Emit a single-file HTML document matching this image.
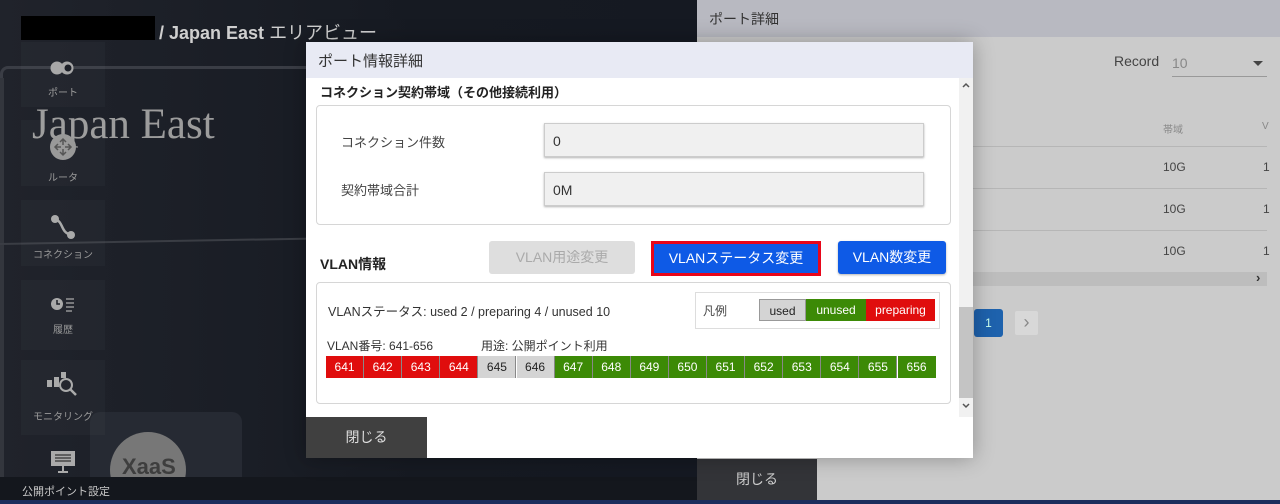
<!DOCTYPE html>
<html><head><meta charset="utf-8"><style>
*{margin:0;padding:0;box-sizing:border-box}
body{width:1280px;height:504px;overflow:hidden;position:relative;background:#1b1e26;font-family:"Liberation Sans","Noto Sans CJK JP",sans-serif;color:#222}
.a{position:absolute}
.side{color:#9a9a9a;font-size:10px;text-align:center;width:84px;left:21px}
.tile{position:absolute;left:21px;width:84px;background:rgba(255,255,255,0.025)}
.cell{position:absolute;top:356px;height:22px;width:38.1px;color:#fff;font-size:12px;text-align:center;line-height:22px;border-right:1px solid #888}
.r{background:#e00d0d}.g{background:#3c8a06}.u{background:#d4d4d4;color:#222}
</style></head><body>
<div class="a" style="left:0;top:0;width:697px;height:500px;background:linear-gradient(90deg,#20232b,#161a22 60%,#151922)"></div>
<div class="a" style="left:0;top:66px;width:697px;height:12px;border-top:3px solid #3a3d45;border-left:3px solid #3a3d45;border-radius:8px 0 0 0"></div>
<div class="a" style="left:0;top:78px;width:4px;height:420px;background:#33363d"></div>
<div class="a" style="left:0;top:243px;width:697px;height:2px;background:#3a3d44;transform:rotate(-1deg);transform-origin:left"></div>
<div class="a" style="left:90px;top:412px;width:152px;height:88px;background:#262a33;border-radius:10px;overflow:hidden"><div class="a" style="left:20px;top:20px;width:76px;height:76px;border-radius:50%;background:#777"></div><div class="a" style="left:32px;top:42px;font-size:22px;font-weight:bold;color:#3e3e3e">XaaS</div></div>
<div class="a" style="left:32px;top:100px;font-family:'Liberation Serif',serif;font-size:43px;color:#9c9c9c">Japan East</div>
<div class="a" style="left:21px;top:16px;width:134px;height:24px;background:#000"></div>
<div class="a" style="left:159px;top:19px;font-size:18px;color:#cfcfcf;font-weight:bold">/ Japan East <span style="font-weight:normal">エリアビュー</span></div>
<div class="tile" style="top:42px;height:65px"></div>
<div class="tile" style="top:120px;height:66px"></div>
<div class="tile" style="top:200px;height:66px"></div>
<div class="tile" style="top:280px;height:70px"></div>
<div class="tile" style="top:360px;height:75px"></div>
<svg class="a" style="left:50px;top:60px" width="26" height="16"><circle cx="7" cy="8" r="6.5" fill="#a8a8a8"/><circle cx="17" cy="8" r="6.5" fill="#a8a8a8"/><circle cx="18" cy="8" r="3.5" fill="#1c1f27"/></svg>
<div class="a side" style="top:84px">ポート</div>
<svg class="a" style="left:50px;top:134px" width="26" height="26"><circle cx="13" cy="13" r="13" fill="#999"/><path d="M13 5v6M10 8l3-3 3 3M13 21v-6M10 18l3 3 3-3M5 13h6M8 10l-3 3 3 3M21 13h-6M18 10l3 3-3 3" stroke="#555" stroke-width="1.5" fill="none"/></svg>
<div class="a side" style="top:169px">ルータ</div>
<svg class="a" style="left:50px;top:214px" width="26" height="26"><circle cx="5" cy="5" r="4" fill="#aaa"/><circle cx="21" cy="21" r="4" fill="#aaa"/><path d="M5 5C14 8 10 18 21 21" stroke="#aaa" stroke-width="2.5" fill="none"/></svg>
<div class="a side" style="top:246px">コネクション</div>
<svg class="a" style="left:50px;top:296px" width="26" height="18"><circle cx="7" cy="8" r="6" fill="#aaa"/><path d="M7 4v4h3" stroke="#1c1f27" stroke-width="1.5" fill="none"/><path d="M16 3h8M16 7h8M16 11h8M16 15h6" stroke="#aaa" stroke-width="1.3"/></svg>
<div class="a side" style="top:321px">履歴</div>
<svg class="a" style="left:46px;top:370px" width="34" height="26"><rect x="1" y="10" width="5" height="7" fill="#aaa"/><rect x="8" y="7" width="5" height="10" fill="#aaa"/><rect x="15" y="2" width="5" height="6" fill="#aaa"/><circle cx="20" cy="15" r="6" stroke="#aaa" stroke-width="2" fill="none"/><path d="M24 19l6 6" stroke="#aaa" stroke-width="2.5"/></svg>
<div class="a side" style="top:408px">モニタリング</div>
<svg class="a" style="left:51px;top:451px" width="24" height="22"><rect x="0" y="0" width="24" height="15" fill="#aaa"/><path d="M4 4h16M4 7h16M4 10h16" stroke="#333" stroke-width="1.2"/><path d="M12 15v5M7 21h10" stroke="#aaa" stroke-width="2"/></svg>
<div class="a" style="left:0;top:477px;width:697px;height:23px;background:#14171d"></div>
<div class="a" style="left:22px;top:483px;font-size:11px;color:#c8c8c8">公開ポイント設定</div>
<div class="a" style="left:697px;top:0;width:583px;height:500px;background:#cbcbcb"></div>
<div class="a" style="left:697px;top:0;width:583px;height:37px;background:#b8b9c1"></div>
<div class="a" style="left:709px;top:9px;font-size:14px;color:#333">ポート詳細</div>
<div class="a" style="left:1114px;top:53px;font-size:14px;color:#444">Record</div>
<div class="a" style="left:1172px;top:55px;font-size:14px;color:#888">10</div>
<div class="a" style="left:1172px;top:76px;width:95px;height:1px;background:#999"></div>
<div class="a" style="left:1253px;top:61px;border-left:5px solid transparent;border-right:5px solid transparent;border-top:5px solid #444"></div>
<div class="a" style="left:1163px;top:121px;font-size:10px;color:#888">帯域</div>
<div class="a" style="left:1262px;top:121px;font-size:10px;color:#888">V</div>
<div class="a" style="left:973px;top:146px;width:294px;height:1px;background:#b6b6b6"></div>
<div class="a" style="left:973px;top:188px;width:294px;height:1px;background:#b6b6b6"></div>
<div class="a" style="left:973px;top:230px;width:294px;height:1px;background:#b6b6b6"></div>
<div class="a" style="left:1163px;top:160px;font-size:12px;color:#444">10G</div>
<div class="a" style="left:1163px;top:202px;font-size:12px;color:#444">10G</div>
<div class="a" style="left:1163px;top:244px;font-size:12px;color:#444">10G</div>
<div class="a" style="left:1263px;top:160px;font-size:12px;color:#444">1</div>
<div class="a" style="left:1263px;top:202px;font-size:12px;color:#444">1</div>
<div class="a" style="left:1263px;top:244px;font-size:12px;color:#444">1</div>
<div class="a" style="left:973px;top:272px;width:294px;height:14px;background:#bdbdbd"></div>
<div class="a" style="left:1256px;top:270px;font-size:13px;color:#333;font-weight:bold">›</div>
<div class="a" style="left:974px;top:309px;width:29px;height:28px;background:#1e62ad;border-radius:3px;color:#cfe;font-size:12px;text-align:center;line-height:28px">1</div>
<div class="a" style="left:1015px;top:311px;width:23px;height:24px;background:#d8d8d8;border-radius:2px;color:#888;font-size:18px;text-align:center;line-height:22px">›</div>
<div class="a" style="left:697px;top:459px;width:120px;height:41px;background:#333438;color:#ccc;font-size:14px;text-align:center;line-height:41px">閉じる</div>
<div class="a" style="left:0;top:500px;width:1280px;height:4px;background:#1c2d5c"></div>
<div class="a" style="left:306px;top:42px;width:667px;height:416px;background:#fff;box-shadow:0 0 20px rgba(0,0,0,.3)"></div>
<div class="a" style="left:306px;top:42px;width:667px;height:36px;background:#e8eaf4"></div>
<div class="a" style="left:318px;top:50px;font-size:15px;color:#333">ポート情報詳細</div>
<div class="a" style="left:959px;top:78px;width:14px;height:339px;background:#f1f1f1"></div>
<div class="a" style="left:959px;top:307px;width:14px;height:91px;background:#c4c4c4"></div>
<svg class="a" style="left:961px;top:81px" width="10" height="8"><path d="M2 6l3-3 3 3" stroke="#555" stroke-width="1.5" fill="none"/></svg>
<svg class="a" style="left:961px;top:402px" width="10" height="8"><path d="M2 2l3 3 3-3" stroke="#555" stroke-width="1.5" fill="none"/></svg>
<div class="a" style="left:320px;top:82px;font-size:13px;font-weight:bold;color:#222">コネクション契約帯域（その他接続利用）</div>
<div class="a" style="left:316px;top:105px;width:635px;height:120px;border:1px solid #d6d6d6;border-radius:4px"></div>
<div class="a" style="left:341px;top:132px;font-size:13px;color:#444">コネクション件数</div>
<div class="a" style="left:544px;top:123px;width:380px;height:34px;background:#f0f0f0;border:1px solid #ccc;box-shadow:0 1px 2px rgba(0,0,0,.3);font-size:14px;line-height:34px;padding-left:8px;color:#333">0</div>
<div class="a" style="left:341px;top:180px;font-size:13px;color:#444">契約帯域合計</div>
<div class="a" style="left:544px;top:172px;width:380px;height:34px;background:#f0f0f0;border:1px solid #ccc;box-shadow:0 1px 2px rgba(0,0,0,.3);font-size:14px;line-height:34px;padding-left:8px;color:#333">0M</div>
<div class="a" style="left:320px;top:254px;font-size:14px;font-weight:bold;color:#222">VLAN情報</div>
<div class="a" style="left:489px;top:241px;width:146px;height:33px;background:#dedede;border-radius:3px;color:#aaa;font-size:14px;text-align:center;line-height:33px">VLAN用途変更</div>
<div class="a" style="left:651px;top:241px;width:170px;height:35px;background:#0e5ae6;border:3px solid #e8061a;color:#fff;font-size:14px;text-align:center;line-height:29px">VLANステータス変更</div>
<div class="a" style="left:838px;top:241px;width:108px;height:33px;background:#0e5ae6;border-radius:3px;color:#fff;font-size:14px;text-align:center;line-height:33px;box-shadow:0 1px 2px rgba(0,0,0,.3)">VLAN数変更</div>
<div class="a" style="left:316px;top:282px;width:635px;height:122px;border:1px solid #d6d6d6;border-radius:4px"></div>
<div class="a" style="left:328px;top:301px;font-size:12.5px;color:#333">VLANステータス: used 2 / preparing 4 / unused 10</div>
<div class="a" style="left:695px;top:292px;width:245px;height:37px;border:1px solid #ddd"></div>
<div class="a" style="left:703px;top:302px;font-size:12px;color:#444">凡例</div>
<div class="a u" style="left:759px;top:299px;width:47px;height:22px;font-size:12px;text-align:center;line-height:22px;border:1px solid #999">used</div>
<div class="a g" style="left:806px;top:299px;width:60px;height:22px;font-size:12px;text-align:center;line-height:22px;color:#fff">unused</div>
<div class="a r" style="left:866px;top:299px;width:69px;height:22px;font-size:12px;text-align:center;line-height:22px;color:#fff">preparing</div>
<div class="a" style="left:327px;top:337px;font-size:12px;color:#333">VLAN番号: 641-656</div>
<div class="a" style="left:481px;top:337px;font-size:12px;color:#333">用途: 公開ポイント利用</div>
<div class="cell r" style="left:326px">641</div>
<div class="cell r" style="left:364.1px">642</div>
<div class="cell r" style="left:402.2px">643</div>
<div class="cell r" style="left:440.3px">644</div>
<div class="cell u" style="left:478.4px">645</div>
<div class="cell u" style="left:516.5px">646</div>
<div class="cell g" style="left:554.6px">647</div>
<div class="cell g" style="left:592.7px">648</div>
<div class="cell g" style="left:630.8px">649</div>
<div class="cell g" style="left:668.9px">650</div>
<div class="cell g" style="left:707px">651</div>
<div class="cell g" style="left:745.1px">652</div>
<div class="cell g" style="left:783.2px">653</div>
<div class="cell g" style="left:821.3px">654</div>
<div class="cell g" style="left:859.4px">655</div>
<div class="cell g" style="left:897.5px;border-right:none">656</div>
<div class="a" style="left:306px;top:417px;width:121px;height:41px;background:#404040;color:#ddd;font-size:14px;text-align:center;line-height:41px">閉じる</div>
</body></html>
